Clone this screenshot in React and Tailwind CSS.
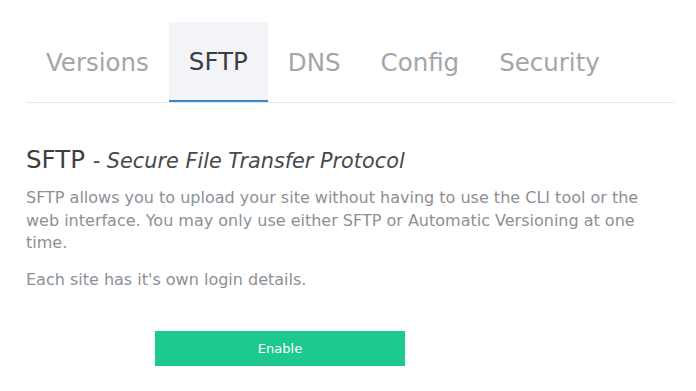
export default function App() {
  const tabs = ['Versions', 'SFTP', 'DNS', 'Config', 'Security'];
  const active = 'SFTP';

  return (
    <div className="min-h-screen bg-white px-[26px] pt-[22px] text-[#3b3f44]" style={{ fontFamily: '"DejaVu Sans", sans-serif' }}>
      <div className="flex w-[649px] border-b border-[#e6e8eb]">
        {tabs.map(t => (
          <div
            key={t}
            className={
              t === active
                ? 'flex h-[80px] items-center px-5 pt-[2px] text-[24.5px] text-[#3a3e43] bg-[#f3f4f7] border-b-2 border-[#3b87c4] -mb-px'
                : 'flex h-[80px] items-center px-5 pt-[2px] text-[24.5px] text-[#a3a6aa]'
            }
          >
            {t}
          </div>
        ))}
      </div>

      <h2 className="mt-[42px] text-[24.5px] leading-[30px] text-[#3b3f44]">
        SFTP <span className="text-[20.8px] italic text-[#47494c]">- Secure File Transfer Protocol</span>
      </h2>
      <p className="mt-[11px] w-[650px] text-[16px] leading-[22.5px] text-[#8c9096]">
        SFTP allows you to upload your site without having to use the CLI tool or the web interface. You may only use either SFTP or Automatic Versioning at one time.
      </p>
      <p className="mt-[14px] text-[16px] leading-[22.5px] text-[#8c9096]">Each site has it's own login details.</p>

      <button className="mt-[40px] ml-[129px] flex h-[35px] w-[250px] items-center justify-center bg-[#1dc98f] text-[13px] text-white">
        Enable
      </button>
    </div>
  );
}
